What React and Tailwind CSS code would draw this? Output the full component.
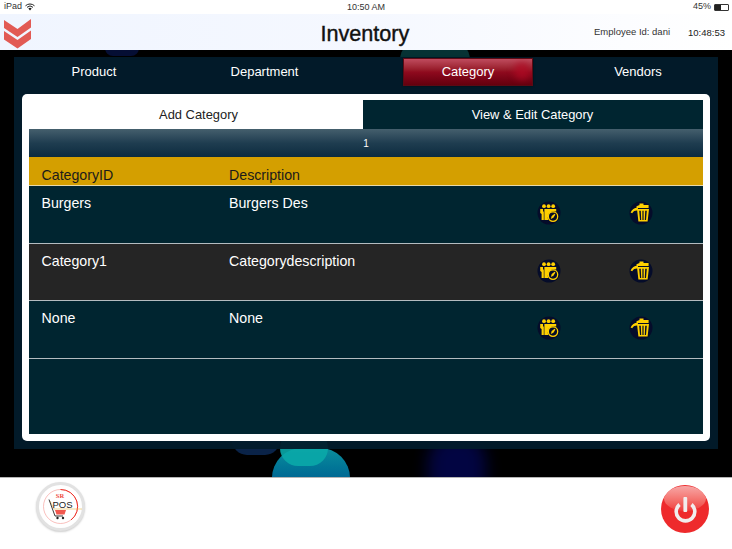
import React from "react";

function Chevrons() {
  return (
    <svg width="30" height="31" viewBox="0 0 30 31" className="block">
      <path d="M1 2 L14.5 11 L28 1 L28 9.5 L14.5 19 L1 10 Z" fill="#e25a54" />
      <path d="M1 13 L14.5 22 L28 12.5 L28 21 L14.5 30.5 L1 21.5 Z" fill="#e25a54" />
    </svg>
  );
}

function EditIcon() {
  return (
    <svg width="24" height="24" viewBox="0 0 24 24" className="block">
      <circle cx="12" cy="12" r="11.5" fill="#050c2a" />
      <g fill="#ffd000">
        <circle cx="7" cy="5.2" r="1.9" />
        <circle cx="11.6" cy="5.2" r="1.9" />
        <circle cx="16.2" cy="5.2" r="1.9" />
        <path d="M3.2 8 H6 V10.5 H6.8 V19 H4.6 V13 L3.2 12 Z" />
        <path d="M7.4 8 H19.2 V10.4 H15 A6.5 6.5 0 0 0 11.4 19 H7.4 Z" />
      </g>
      <circle cx="16" cy="15.6" r="4.7" fill="#050c2a" stroke="#ffd000" strokeWidth="1.3" />
      <path d="M13.8 17.9 L14.7 15 L17.6 12.8 L18.4 13.6 L16.4 16.8 Z" fill="#ffd000" />
    </svg>
  );
}

function TrashIcon() {
  return (
    <svg width="24" height="24" viewBox="0 0 24 24" className="block">
      <circle cx="12" cy="12" r="11.5" fill="#050c2a" />
      <g fill="#ffd000">
        <path d="M10.5 2.6 H14.5 V4 H19.6 V7 H7.5 V5.2 L10.5 4 Z" />
        <path d="M1.6 11.6 C3 8.2 5.6 6.6 9 6.8 L8.8 9.6 C6.4 9.4 4.4 10 3.2 12.2 Z" />
        <path d="M8 8 H20 L18.6 20.6 H9.4 Z M10.2 9.8 L11 19 H12.2 L11.8 9.8 Z M13.4 9.8 V19 H14.6 V9.8 Z M16.2 9.8 L15.8 19 H17 L17.8 9.8 Z" fillRule="evenodd" />
      </g>
    </svg>
  );
}

function Logo() {
  return (
    <div className="relative h-[49px] w-[49px] rounded-full border-[3px] border-[#e2e2e2] bg-white shadow-[0_1px_2px_rgba(0,0,0,0.2)]">
      <svg width="43" height="43" viewBox="0 0 43 43" className="block">
        <circle cx="21.5" cy="21.5" r="17" fill="none" stroke="#f6a5a0" strokeWidth="0.7" />
        <path d="M21.5 4.5 A17 17 0 0 1 32 35" fill="none" stroke="#ee2d24" strokeWidth="1" />
        <path d="M11 16 L15 24 H43" fill="none" stroke="#e8b84a" strokeWidth="0.6" />
        <path d="M10 14.5 L16 31 H24" fill="none" stroke="#222" strokeWidth="0.9" />
        <path d="M16 25 H27 L25.5 29.5 H17.5 Z" fill="#f0584f" />
        <circle cx="18.5" cy="33" r="1.2" fill="#222" />
        <circle cx="24" cy="33" r="1.2" fill="#222" />
        <text x="21" y="12.5" textAnchor="middle" fontSize="6.5" fontWeight="700" fill="#ee4a40" fontFamily="Liberation Serif, serif">SR</text>
        <text x="23.5" y="22.5" textAnchor="middle" fontSize="9.5" fill="#222" fontFamily="Liberation Sans, sans-serif">POS</text>
      </svg>
    </div>
  );
}

function Power() {
  return (
    <div className="relative h-[48px] w-[48px] overflow-hidden rounded-full bg-[#ee2a2c]">
      <div className="absolute left-[3px] top-[1px] h-[25px] w-[42px] rounded-[50%] bg-gradient-to-b from-[#f6a6a6] to-[#ee3a3c]" />
      <svg width="48" height="48" viewBox="0 0 48 48" className="absolute inset-0">
        <path d="M18.5 19.5 A9.3 9.3 0 1 0 30.5 19.5" fill="none" stroke="#f1eded" strokeWidth="3.6" />
        <rect x="22.4" y="12" width="3.8" height="15" rx="1" fill="#f1eded" />
      </svg>
    </div>
  );
}

const rows = [
  { id: "Burgers", d: "Burgers Des", bg: "bg-[#002530]" },
  { id: "Category1", d: "Categorydescription", bg: "bg-[#252525]" },
  { id: "None", d: "None", bg: "bg-[#002530]" },
];

function Row({ id, d, bg }) {
  return (
    <div className={`${bg} relative flex h-[57.5px] border-b border-[#b4bcc0] text-[14.2px] text-white`}>
      <div className="w-[200px] pl-[12.5px] pt-[8px] leading-[18px]">{id}</div>
      <div className="w-[297px] pt-[8px] leading-[18px]">{d}</div>
      <div className="w-[96px] pl-[11px] pt-[15px]"><EditIcon /></div>
      <div className="pl-[7px] pt-[15px]"><TrashIcon /></div>
    </div>
  );
}

function Nav({ children, active, className }) {
  return (
    <div className={`flex h-[28px] shrink-0 items-center justify-center text-[13px] text-white ${className} ${active ? "relative overflow-hidden border border-[#5c0a14] bg-gradient-to-b from-[#bf4b5e] via-[#8f0a1e] to-[#64000e] shadow-[0_0_2px_rgba(0,0,0,0.5)]" : ""}`}>
      {children}
    </div>
  );
}

export default function App() {
  return (
    <div className="flex h-[549px] w-[732px] flex-col overflow-hidden bg-white font-['Liberation_Sans',Arial,sans-serif]">
      {/* status bar */}
      <div className="relative flex h-[14px] items-center justify-between bg-white pl-[4px] pr-[3px] text-[9px] text-[#333]">
        <div className="flex items-center gap-[3px]">
          <span>iPad</span>
          <svg width="10" height="8" viewBox="0 0 10 8">
            <path d="M0.5 2.8 A6.5 6.5 0 0 1 9.5 2.8 M2 4.3 A4.4 4.4 0 0 1 8 4.3" fill="none" stroke="#222" strokeWidth="1" />
            <path d="M3.3 5.4 A2.6 2.6 0 0 1 6.7 5.4 L5 7.4 Z" fill="#222" />
          </svg>
        </div>
        <span className="absolute left-[347px] top-[1px] leading-[12px]">10:50 AM</span>
        <div className="flex items-center gap-[3px]">
          <span>45%</span>
          <div className="flex h-[7px] w-[15px] rounded-[1px] border border-[#333]">
            <div className="h-full w-[6px] bg-[#222]" />
          </div>
        </div>
      </div>

      {/* header */}
      <div className="relative flex h-[36px] items-center bg-gradient-to-r from-[#f0f5ff] via-[#f5f8ff] to-white">
        <div className="ml-[3px] mt-[3px]"><Chevrons /></div>
        <div className="absolute left-[320.5px] top-[6px] text-[21.6px] leading-[28px] text-[#111] [-webkit-text-stroke:0.4px_#111]">Inventory</div>
        <div className="absolute left-[594px] top-[12px] text-[9.5px] leading-[12px] text-[#333]">Employee Id: dani</div>
        <div className="absolute left-[688px] top-[12.5px] text-[9.5px] leading-[12px] text-[#222]">10:48:53</div>
      </div>

      {/* main */}
      <div className="relative h-[427px] overflow-hidden bg-black pt-[7px]">
        {/* decorative bokeh */}
        <div className="absolute left-[272px] top-[398px] h-[60px] w-[78px] rounded-full bg-gradient-to-b from-[#0d8f9c] to-[#063f88]" />
        <div className="absolute left-[280px] top-[380px] h-[36px] w-[48px] rounded-full bg-[#0aa9a9] opacity-90" />
        <div className="absolute left-[232px] top-[375px] h-[30px] w-[48px] rounded-full bg-[#0a2348]" />
        <div className="absolute left-[428px] top-[385px] h-[70px] w-[58px] rounded-[40%] bg-[#04085e] opacity-70 blur-[8px]" />
        <div className="absolute left-[105px] top-[-2px] h-[8px] w-[34px] rounded-b-full bg-[#07144a] opacity-70" />
        <div className="absolute left-[400px] top-[-10px] h-[40px] w-[70px] rounded-full bg-[#0c6468] opacity-50" />

        {/* panel */}
        <div className="relative mx-[14px] h-[392px] bg-[#021b2b]/95 px-[8px]">
          {/* nav */}
          <div className="relative flex h-[37px] items-start pt-[1px]">
            <Nav className="w-[144px]">Product</Nav>
            <Nav className="ml-[22px] w-[153px]">Department</Nav>
            <Nav active className="ml-[62px] w-[130px]">
              <div className="absolute right-[2px] top-[3px] h-[18px] w-[16px] rounded-full bg-[#b00a24]/70 blur-[3px]" />
              <span className="relative">Category</span>
            </Nav>
            <Nav className="ml-[33px] w-[144px]">Vendors</Nav>
          </div>

          {/* card */}
          <div className="h-[347px] rounded-[5px] bg-white px-[7px] pt-[6px]">
            {/* tabs */}
            <div className="flex h-[29px] text-[12.9px]">
              <div className="flex w-[334px] items-center justify-center pl-[5px] text-[#222]">Add Category</div>
              <div className="flex flex-1 items-center justify-center bg-[#002530] pr-[1px] text-white">View &amp; Edit Category</div>
            </div>
            {/* pager */}
            <div className="flex h-[28px] items-center justify-center bg-gradient-to-b from-[#455f6d] via-[#1f3d50] to-[#0b2b3f] text-[10px] text-white">
              <span>1</span>
            </div>
            {/* head */}
            <div className="flex h-[29px] items-center border-b border-[#e7d9a8] bg-[#d49f00] pt-[10px] text-[14.2px] text-[#1b1b1b]">
              <div className="w-[200px] pl-[12.5px]">CategoryID</div>
              <div>Description</div>
            </div>
            {/* body */}
            <div className="h-[248px] bg-[#002530]">
              {rows.map((r) => (
                <Row key={r.id} {...r} />
              ))}
            </div>
          </div>
        </div>
      </div>

      {/* footer */}
      <div className="flex flex-1 justify-between border-t border-[#b5b5b5] bg-white pl-[36px] pr-[23px]">
        <div className="mt-[4px]"><Logo /></div>
        <div className="mt-[7px]"><Power /></div>
      </div>
    </div>
  );
}
